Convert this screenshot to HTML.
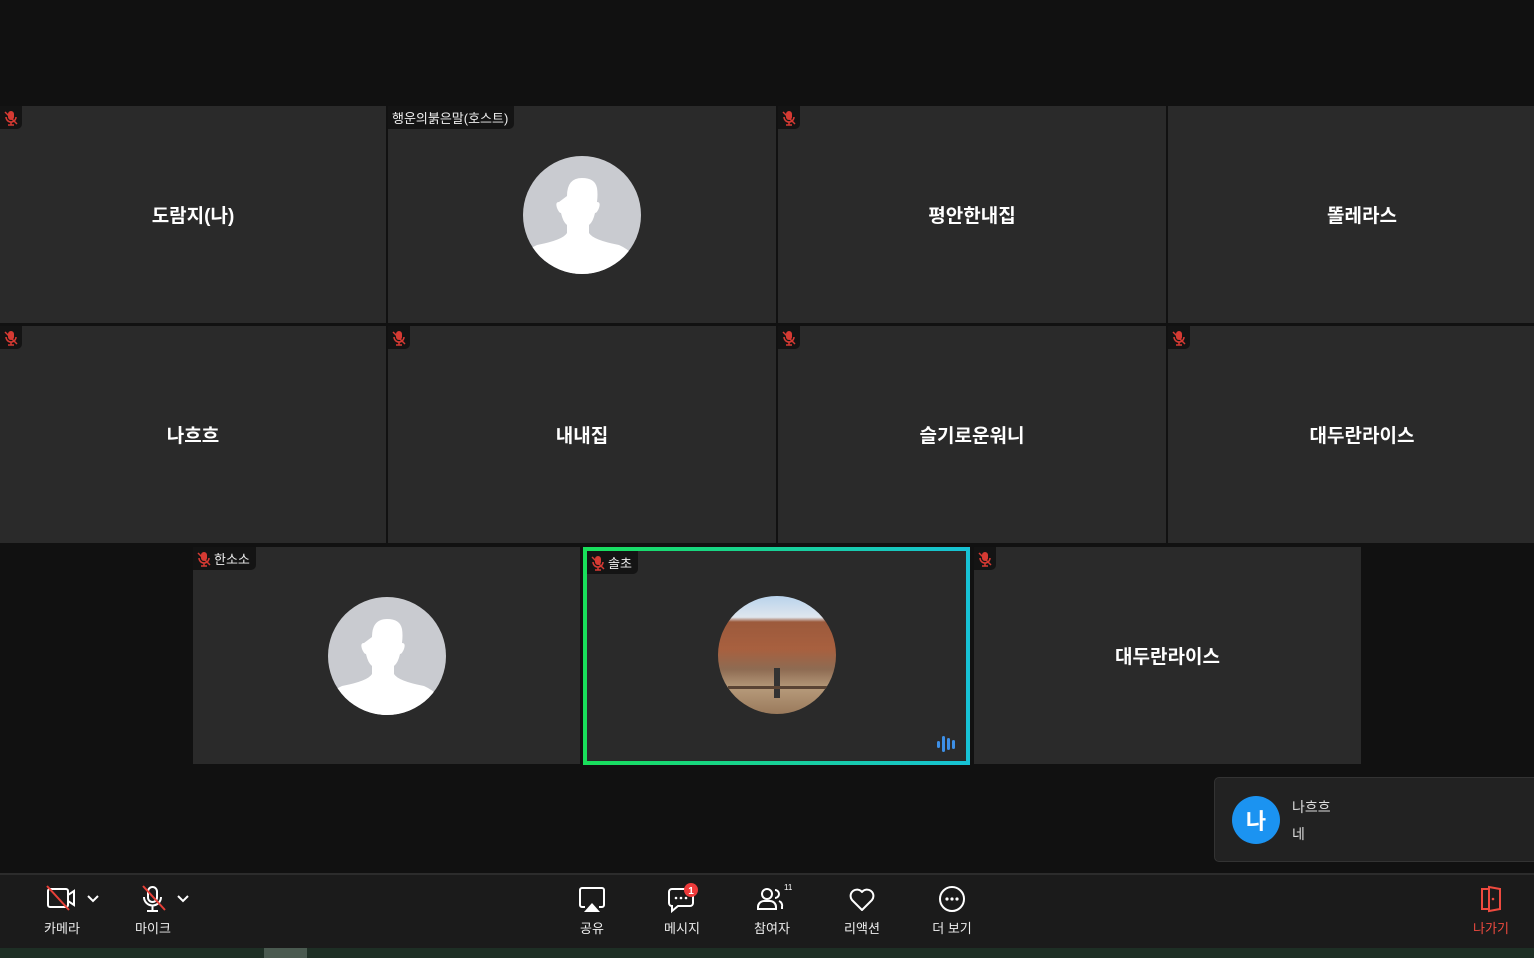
<!DOCTYPE html>
<html><head><meta charset="utf-8"><style>
*{margin:0;padding:0;box-sizing:border-box}
body{width:1534px;height:958px;background:#111;position:relative;overflow:hidden;font-family:"Liberation Sans","Noto Sans CJK KR",sans-serif;color:#fff}
.t{position:absolute;background:#2a2a2a;display:flex;align-items:center;justify-content:center;font-size:19px;font-weight:bold}
.lb{position:absolute;left:0;top:0;height:23px;background:#141414;border-bottom-right-radius:5px;display:flex;align-items:center;padding:0 6px 0 4px;font-size:13px;font-weight:normal;color:#eee;gap:3px}
.tb{position:absolute;top:873px;left:0;width:1534px;height:75px;background:#1b1b1b;border-top:2px solid #2c2c2c}
.btn{position:absolute;top:8px;display:flex;flex-direction:column;align-items:center;font-size:13px;color:#eee;width:80px}
.btn svg{height:32px}
.btn span{margin-top:3px}
</style></head><body>
<svg width="0" height="0" style="position:absolute"><defs>
<g id="mic"><rect x="4" y="1" width="6" height="9" rx="3" fill="#d63a33"/><path d="M2 7a5 5 0 0 0 10 0M7 12v3M4 15h6" stroke="#d63a33" stroke-width="1.5" fill="none"/><path d="M1 2l12 12" stroke="#d63a33" stroke-width="1.5"/></g>
<clipPath id="cc"><circle cx="59" cy="59" r="59"/></clipPath>
<g id="person"><circle cx="59" cy="59" r="59" fill="#c9cbd0"/><path clip-path="url(#cc)" d="M44 40q0-18 15-18q13 0 15 10q1 6 0 14q4 0 2 6q-2 5-4 5q-2 9-6 12v8q4 7 30 12q9 4 14 10v30H0v-30q5-6 14-10q26-5 30-12v-8q-4-3-6-12q-2 0-4-5q-2-6 2-6z" fill="#fff"/></g>
</defs></svg>

<div class="t" style="left:0;top:106px;width:386px;height:217px">도람지(나)<div class="lb" style="padding:0 4px"><svg width="14" height="16"><use href="#mic"/></svg></div></div>
<div class="t" style="left:388px;top:106px;width:388px;height:217px"><svg width="118" height="118"><use href="#person"/></svg><div class="lb">행운의붉은말(호스트)</div></div>
<div class="t" style="left:778px;top:106px;width:388px;height:217px">평안한내집<div class="lb" style="padding:0 4px"><svg width="14" height="16"><use href="#mic"/></svg></div></div>
<div class="t" style="left:1168px;top:106px;width:388px;height:217px">똘레라스</div>
<div class="t" style="left:0;top:326px;width:386px;height:217px">나흐흐<div class="lb" style="padding:0 4px"><svg width="14" height="16"><use href="#mic"/></svg></div></div>
<div class="t" style="left:388px;top:326px;width:388px;height:217px">내내집<div class="lb" style="padding:0 4px"><svg width="14" height="16"><use href="#mic"/></svg></div></div>
<div class="t" style="left:778px;top:326px;width:388px;height:217px">슬기로운워니<div class="lb" style="padding:0 4px"><svg width="14" height="16"><use href="#mic"/></svg></div></div>
<div class="t" style="left:1168px;top:326px;width:388px;height:217px">대두란라이스<div class="lb" style="padding:0 4px"><svg width="14" height="16"><use href="#mic"/></svg></div></div>
<div class="t" style="left:193px;top:547px;width:387px;height:217px"><svg width="118" height="118"><use href="#person"/></svg><div class="lb"><svg width="14" height="16"><use href="#mic"/></svg>한소소</div></div>
<div style="position:absolute;left:583px;top:547px;width:387px;height:218px;background:linear-gradient(90deg,#19e05a,#17c2d6)"></div>
<div class="t" style="left:587px;top:551px;width:379px;height:210px">
<div style="width:118px;height:118px;border-radius:50%;overflow:hidden;background:linear-gradient(180deg,#b9d3ec 0%,#dfe6ee 18%,#9c5a3c 22%,#a8603f 45%,#8e6b52 62%,#b69a7a 78%,#9a7a5c 100%);position:relative;margin-top:-2px"><div style="position:absolute;left:56px;top:72px;width:6px;height:30px;background:#333"></div><div style="position:absolute;left:10px;top:90px;width:100px;height:3px;background:#5a4434"></div></div>
<div class="lb" style="left:0;top:0"><svg width="14" height="16"><use href="#mic"/></svg>솔초</div>
<svg style="position:absolute;right:8px;bottom:8px" width="22" height="18"><g fill="#3d8fe6"><rect x="1" y="6" width="3" height="7" rx="1.5"/><rect x="6" y="1" width="3" height="16" rx="1.5"/><rect x="11" y="3" width="3" height="12" rx="1.5"/><rect x="16" y="5" width="3" height="9" rx="1.5"/></g></svg>
</div>
<div class="t" style="left:974px;top:547px;width:387px;height:217px">대두란라이스<div class="lb" style="padding:0 4px"><svg width="14" height="16"><use href="#mic"/></svg></div></div>

<div style="position:absolute;left:1214px;top:777px;width:330px;height:85px;background:#222;border:1px solid #333;border-radius:5px">
<div style="position:absolute;left:17px;top:18px;width:48px;height:48px;border-radius:50%;background:#1b93f1;font-size:22px;font-weight:bold;display:flex;align-items:center;justify-content:center">나</div>
<div style="position:absolute;left:77px;top:19px;font-size:14px;color:#ddd">나흐흐</div>
<div style="position:absolute;left:77px;top:46px;font-size:14px;color:#ddd">네</div>
</div>

<div class="tb">
<div class="btn" style="left:22px"><svg width="40" height="32" viewBox="0 0 40 32"><rect x="6" y="6" width="20" height="18" rx="2" stroke="#fff" stroke-width="2" fill="none"/><path d="M26 12l6-4v14l-6-4" stroke="#fff" stroke-width="2" fill="none"/><path d="M5 3l22 24" stroke="#e84038" stroke-width="2"/></svg><span>카메라</span></div>
<svg style="position:absolute;left:87px;top:20px" width="12" height="8"><path d="M1 1l5 5 5-5" stroke="#fff" stroke-width="2" fill="none"/></svg>
<div class="btn" style="left:113px"><svg width="40" height="32" viewBox="0 0 40 32"><rect x="15" y="4" width="9" height="15" rx="4.5" stroke="#fff" stroke-width="2" fill="none"/><path d="M11 14a8.5 8.5 0 0 0 17 0M19.5 23v5M14 28h11" stroke="#fff" stroke-width="2" fill="none"/><path d="M10 3l22 24" stroke="#e84038" stroke-width="2"/></svg><span>마이크</span></div>
<svg style="position:absolute;left:177px;top:20px" width="12" height="8"><path d="M1 1l5 5 5-5" stroke="#fff" stroke-width="2" fill="none"/></svg>

<div class="btn" style="left:552px"><svg width="32" height="32" viewBox="0 0 32 32"><path d="M9 24H6a2 2 0 0 1-2-2V7a2 2 0 0 1 2-2h20a2 2 0 0 1 2 2v15a2 2 0 0 1-2 2h-3" stroke="#fff" stroke-width="2" fill="none"/><path d="M8 29l8-9 8 9z" fill="#fff"/></svg><span>공유</span></div>
<div class="btn" style="left:642px"><svg width="40" height="32" viewBox="0 0 40 32"><path d="M10 6h18a3 3 0 0 1 3 3v11a3 3 0 0 1-3 3H16l-6 5v-5a3 3 0 0 1-3-3V9a3 3 0 0 1 3-3z" stroke="#fff" stroke-width="2" fill="none"/><circle cx="14" cy="15" r="1.3" fill="#fff"/><circle cx="19" cy="15" r="1.3" fill="#fff"/><circle cx="24" cy="15" r="1.3" fill="#fff"/><circle cx="29" cy="7" r="7" fill="#ee3b3b"/><text x="29" y="11" font-size="10" font-weight="bold" text-anchor="middle" fill="#fff" font-family="Liberation Sans">1</text></svg><span>메시지</span></div>
<div class="btn" style="left:732px"><svg width="40" height="32" viewBox="0 0 40 32"><circle cx="15" cy="11" r="5" stroke="#fff" stroke-width="2" fill="none"/><path d="M6 26v-2a6 6 0 0 1 6-6h6a6 6 0 0 1 6 6v2z" stroke="#fff" stroke-width="2" fill="none"/><path d="M23 7a4 4 0 0 1 0 8M27 18a5 5 0 0 1 3 6v2" stroke="#fff" stroke-width="2" fill="none"/><text x="32" y="7" font-size="8" fill="#fff" font-family="Liberation Sans">11</text></svg><span>참여자</span></div>
<div class="btn" style="left:822px"><svg width="32" height="32" viewBox="0 0 32 32"><path d="M16 27L6 17a6 6 0 0 1 10-8 6 6 0 0 1 10 8z" stroke="#fff" stroke-width="2" fill="none" stroke-linejoin="round"/></svg><span>리액션</span></div>
<div class="btn" style="left:912px"><svg width="32" height="32" viewBox="0 0 32 32"><circle cx="16" cy="16" r="12" stroke="#fff" stroke-width="2" fill="none"/><circle cx="11" cy="16" r="1.6" fill="#fff"/><circle cx="16" cy="16" r="1.6" fill="#fff"/><circle cx="21" cy="16" r="1.6" fill="#fff"/></svg><span>더 보기</span></div>

<div class="btn" style="left:1451px;color:#ee4a3f"><svg width="32" height="32" viewBox="0 0 32 32"><path d="M7 6h18v20H7z" stroke="#ee4a3f" stroke-width="2" fill="none"/><path d="M14 4l11 2v20l-11 2z" stroke="#ee4a3f" stroke-width="2" fill="#1b1b1b"/><circle cx="18" cy="16" r="1.3" fill="#ee4a3f"/></svg><span>나가기</span></div>
</div>
<div style="position:absolute;left:0;top:948px;width:1534px;height:10px;background:#1e2f25"></div>
<div style="position:absolute;left:264px;top:948px;width:43px;height:10px;background:#4a5a50"></div>
</body></html>
